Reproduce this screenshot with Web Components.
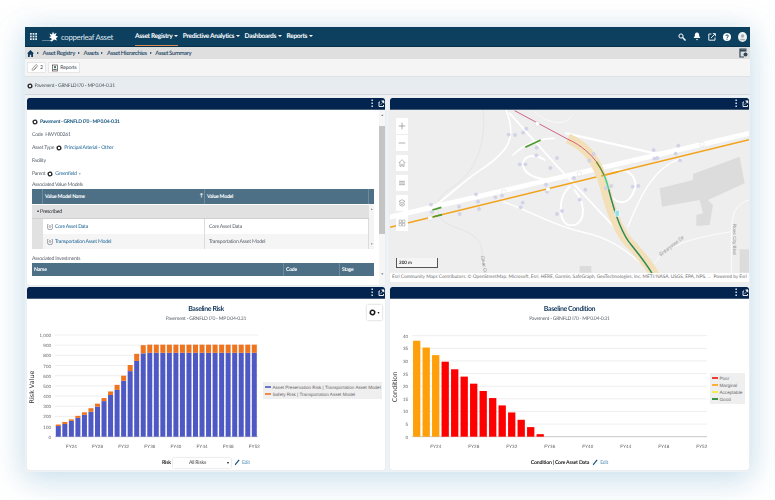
<!DOCTYPE html>
<html lang="en">
<head>
<meta charset="utf-8">
<title>Asset Summary</title>
<style>
html, body { margin: 0; background: #fff; }
body { padding: 27px 25px 0; width: 725px; height: 473px; overflow: hidden; font-family: Lato, "Liberation Sans", sans-serif; text-rendering: geometricPrecision; }
</style>
</head>
<body>
<asset-app></asset-app>

<script>
// Small shared icons.
const gearIcon = (size, color = '#1a1a1a') => `
<svg width="${size}" height="${size}" viewBox="0 0 12 12" style="flex:none">
  <circle cx="6" cy="6" r="3.6" fill="none" stroke="${color}" stroke-width="2.2"/>
  <circle cx="6" cy="6" r="4.9" fill="none" stroke="${color}" stroke-width="1.2" stroke-dasharray="1.4 1.1"/>
</svg>`

const panelIcons = `
<svg width="15" height="9" viewBox="0 0 15 9">
  <g fill="#fff"><rect x="1.5" y="0.5" width="1.3" height="1.5"/><rect x="1.5" y="3.5" width="1.3" height="1.5"/><rect x="1.5" y="6.5" width="1.3" height="1.5"/></g>
  <path d="M10 3H9v4.500h4.500V6" fill="none" stroke="#fff" stroke-width=".9"/>
  <path d="M10.500 6l2.500-3M11.500 1.800h2.500v2.500z" fill="#fff" stroke="#fff" stroke-width=".5"/>
</svg>`

customElements.define('asset-navbar', class extends HTMLElement {
  constructor () {
    super()
    this.attachShadow({ mode: 'open' }).innerHTML = `
<style>
:host { display: flex; align-items: center; height: 19px; background: #0d3f5f; color: #fff; border-bottom: 1px solid #06304b; padding-left: 5px; }
.logo { display: flex; align-items: center; margin-left: 5px; width: 93px; flex: none; }
.name { font-size: 7.8px; font-weight: 400; color: #dfe9ef; letter-spacing: -0.3px; }
nav { display: flex; height: 100%; gap: 4.5px; font-size: 6.6px; font-weight: 700; letter-spacing: -0.33px; }
nav a { display: flex; align-items: center; height: 100%; box-sizing: border-box; border-bottom: 1px solid transparent; }
nav a.active { border-bottom: 1px solid #d98c4e; }
nav a::after { content: ''; border: 2px solid transparent; border-top: 2.6px solid #fff; border-bottom: 0; margin-left: 2px; }
.tools { margin-left: auto; display: flex; align-items: center; gap: 7px; padding-right: 3.5px; }
</style>
<svg width="7" height="7" viewBox="0 0 8 8" fill="#e8eef2" style="flex:none">
  <rect width="2" height="2"/><rect x="3" width="2" height="2"/><rect x="6" width="2" height="2"/>
  <rect y="3" width="2" height="2"/><rect x="3" y="3" width="2" height="2"/><rect x="6" y="3" width="2" height="2"/>
  <rect y="6" width="2" height="2"/><rect x="3" y="6" width="2" height="2"/><rect x="6" y="6" width="2" height="2"/>
</svg>
<div class="logo">
  <svg width="19" height="12" viewBox="0 0 19 12" style="flex:none">
    <path d="M0 9.5h9" stroke="#9fb6c5" stroke-width=".6"/>
    <path d="M8 10l2-2-3-2 2-.5-1.500-3 2.500 1 1-3 1 2.500 2.500-1-1 3 2.500 0-2 2.500 1 2-3-1-2 2z" fill="#fff"/>
  </svg>
  <span class="name">copperleaf Asset</span>
</div>
<nav><a class="active">Asset Registry</a><a>Predictive Analytics</a><a>Dashboards</a><a>Reports</a></nav>
<div class="tools">
  <svg width="8" height="8" viewBox="0 0 8 8"><circle cx="3" cy="3" r="2.1" fill="none" stroke="#fff" stroke-width="1"/><path d="M4.6 4.6L7.5 7.5" stroke="#fff" stroke-width="1.4"/></svg>
  <svg width="8" height="9" viewBox="0 0 8 9"><path d="M4 .5c-1.800 0-2.200 1.500-2.200 3 0 1.300-.8 2-1.200 2.600h6.800c-.4-.6-1.200-1.300-1.200-2.600 0-1.500-.4-3-2.200-3zM3 7h2l-1 1.500z" fill="#fff"/></svg>
  <svg width="8" height="8" viewBox="0 0 8 8"><path d="M3.500 1H.8v6.200H7V4.500" fill="none" stroke="#fff" stroke-width=".9"/><path d="M3 5l4-4M4.800.6h2.600v2.600" fill="none" stroke="#fff" stroke-width=".9"/></svg>
  <svg width="8" height="8" viewBox="0 0 8 8"><circle cx="4" cy="4" r="4" fill="#fff"/><path d="M2.800 3c0-1.500 2.500-1.500 2.500 0 0 1-1.300 1-1.300 2" fill="none" stroke="#0d3f5f" stroke-width=".9"/><rect x="3.500" y="5.700" width="1" height="1" fill="#0d3f5f"/></svg>
  <svg width="9" height="10" viewBox="0 0 9 10"><ellipse cx="4.500" cy="5" rx="4.500" ry="5" fill="#eef1f3"/><circle cx="4.500" cy="4" r="1.700" fill="#a9b0b5"/><path d="M1.500 8.200c.5-2 5.500-2 6 0z" fill="#a9b0b5"/></svg>
</div>`
  }
})

customElements.define('asset-breadcrumb', class extends HTMLElement {
  constructor () {
    super()
    const crumbs = ['Asset Registry', 'Assets', 'Asset Hierarchies', 'Asset Summary']
    this.attachShadow({ mode: 'open' }).innerHTML = `
<style>
:host { display: flex; align-items: center; height: 12px; background: #dfdfdf; padding-left: 2px; font-size: 6px; color: #123a5c; letter-spacing: -0.37px; font-weight: 500; }
i { border: 1.7px solid transparent; border-left: 2.6px solid #123a5c; border-right: 0; margin: 0 3.5px 0 3px; }
svg.gear { margin-left: auto; margin-right: 1px; }
</style>
<svg width="7" height="7" viewBox="0 0 7 7"><path d="M3.500 0L7 3.500H6V7H4.200V4.800H2.800V7H1V3.500H0z" fill="#123a5c"/></svg><i></i>
${crumbs.map((c) => `<span>${c}</span>`).join('<i></i>')}
<svg class="gear" width="10" height="10" viewBox="0 0 10 10"><path d="M7.500 1H1v8h4" fill="none" stroke="#33475a" stroke-width="1.2"/><path d="M1 1.500h6.500v2H1z" fill="#33475a"/><circle cx="6.500" cy="6.500" r="2" fill="#33475a"/></svg>`
  }
})

customElements.define('asset-toolbar', class extends HTMLElement {
  constructor () {
    super()
    this.attachShadow({ mode: 'open' }).innerHTML = `
<style>
:host { display: flex; align-items: center; gap: 2px; height: 18px; background: #f5f5f5; border-bottom: 1px solid #e0e3e5; box-sizing: border-box; padding: 0 2px; font-size: 5.2px; letter-spacing: -0.2px; color: #33414c; }
button { all: unset; display: flex; align-items: center; gap: 2px; height: 11px; padding: 0 2.5px 0 3px; background: #fff; border: 1px solid #e6e6e6; border-radius: 1px; box-sizing: border-box; font: inherit; letter-spacing: inherit; }
</style>
<button><svg width="7" height="8" viewBox="0 0 7 8"><path d="M5.500 2.500L2.700 6c-.9 1-2.200 0-1.400-1.100L4.300 1.200c1.300-1.300 2.700.2 1.700 1.400L3.200 6" fill="none" stroke="#666" stroke-width=".6"/></svg>2</button>
<button><svg width="6" height="8" viewBox="0 0 7 8"><rect x=".5" y=".5" width="6" height="7" fill="#fff" stroke="#444" stroke-width=".8"/><circle cx="3.500" cy="3" r="1.300" fill="#2f6f5a"/><path d="M1.500 5.700h4" stroke="#444"/></svg>Reports</button>`
  }
})

customElements.define('asset-title', class extends HTMLElement {
  constructor () {
    super()
    this.attachShadow({ mode: 'open' }).innerHTML = `
<style>
:host { display: flex; align-items: center; gap: 1.5px; height: 18px; background: #e6ecef; border-bottom: 1px solid #d5d9dc; box-sizing: border-box; padding-left: 2px; font-size: 5px; letter-spacing: -0.25px; color: #4c5660; }
</style>
${gearIcon(6)}<span><slot></slot></span>`
  }
})

customElements.define('asset-panel', class extends HTMLElement {
  constructor () {
    super()
    this.attachShadow({ mode: 'open' }).innerHTML = `
<style>
:host { display: flex; flex-direction: column; min-height: 0; background: #fff; box-shadow: 0 0 1px #c6ccd0; border-radius: 2px; overflow: hidden; }
header { display: flex; justify-content: flex-end; align-items: center; height: 12px; flex: none; background: #02244f; border-bottom: 1px solid #4a6078; box-sizing: border-box; border-radius: 2px 2px 0 0; }
.body { flex: 1; min-height: 0; position: relative; }
</style>
<header>${panelIcons}</header>
<div class="body"><slot></slot></div>`
  }
})

customElements.define('asset-summary', class extends HTMLElement {
  constructor () {
    super()
    this.attachShadow({ mode: 'open' }).innerHTML = `
<style>
:host { display: flex; height: 100%; font-size: 5.2px; color: #59636c; letter-spacing: -0.25px; }
.main { flex: 1; padding: 5px 5px 0 5px; overflow: hidden; min-width: 0; }
.row { display: flex; align-items: center; gap: 2px; height: 13px; }
a { color: #1f6797; }
a.strong { font-size: 5px; color: #12527f; font-weight: 700; letter-spacing: -0.28px; }
.more { color: #aab; font-size: 4px; }
.caption { height: 8px; line-height: 8px; margin-top: 1px; }
.grid { display: grid; grid-template-columns: 11px 162px 164px 1fr; }
.head { background: #4e7087; color: #fff; font-weight: 700; height: 15px; display: flex; align-items: center; padding-left: 2px; border-right: 1px solid #6f8a9c; box-sizing: border-box; position: relative; }
.head b { position: absolute; right: 1px; top: 4px; font-size: 5px; }
.group { grid-column: 1 / 4; background: #e1e1e1; height: 14px; margin-top: 1px; display: flex; align-items: center; color: #2d3236; padding-left: 5px; gap: 2px; font-size: 5.3px; border-bottom: 1px solid #cfcfcf; box-sizing: border-box; }
.side { background: #e1e1e1; height: 15px; }
.cell { height: 15px; display: flex; align-items: center; gap: 2px; padding-left: 4px; background: #fff; box-sizing: border-box; border-right: 1px solid #dcdcdc; }
.alt { background: #f5f5f5; }
.scroll { grid-column: 4; grid-row: 2 / 5; background: #f4f4f4; color: #888; font-size: 3px; text-align: center; display: flex; flex-direction: column; justify-content: space-between; padding: 3px 0; }
.invest { display: grid; grid-template-columns: 252px 56px 1fr; }
.invest div { background: #4e7087; color: #fff; font-weight: 700; height: 13px; display: flex; align-items: center; padding-left: 2px; border-right: 1px solid #6f8a9c; box-sizing: border-box; }
.bar { flex: none; width: 6px; background: #f6f6f6; box-sizing: border-box; display: flex; flex-direction: column; color: #666; font-size: 3px; text-align: center; }
.bar span { height: 17px; line-height: 10px; }
.thumb { height: 118px; background: #c4c4c4; margin-bottom: 35px; }
</style>
<div class="main">
  <div class="row">${gearIcon(6)}<a class="strong">Pavement - GRNFLD I70 - MP 0.04-0.31</a></div>
  <div class="row">Code&nbsp; HWY00261</div>
  <div class="row">Asset Type ${gearIcon(6)}<a>Principal Arterial - Other</a></div>
  <div class="row">Facility</div>
  <div class="row">Parent ${gearIcon(6)}<a>Greenfield</a><span class="more">▾</span></div>
  <div class="caption">Associated Value Models</div>
  <div class="grid">
    <div class="head"></div><div class="head">Value Model Name<b>↑</b></div><div class="head">Value Model</div><div class="head" style="border:0"></div>
    <div class="group">▪ Prescribed</div><div class="scroll"><span>▲</span><span>▼</span></div>
    <div class="side"></div><div class="cell">${this.modelIcon()}<a>Core Asset Data</a></div><div class="cell">Core Asset Data</div>
    <div class="side"></div><div class="cell alt">${this.modelIcon()}<a>Transportation Asset Model</a></div><div class="cell alt">Transportation Asset Model</div>
  </div>
  <div class="caption" style="margin-top:6px">Associated Investments</div>
  <div class="invest"><div>Name</div><div>Code</div><div style="border:0">Stage</div></div>
</div>
<div class="bar"><span>▲</span><div class="thumb"></div><span>▼</span></div>`
  }

  /**
   * The little model glyph in the grid rows.
   *
   * @returns {string} The svg markup.
   */
  modelIcon () {
    return '<svg width="6" height="6" viewBox="0 0 6 6" style="flex:none"><path d="M1.500.5H.5v4h1M4.500.5h1v4h-1" fill="none" stroke="#778" stroke-width=".6"/><circle cx="3" cy="2.500" r="1" fill="none" stroke="#778" stroke-width=".6"/><path d="M1 5.500h4" stroke="#778" stroke-width=".6"/></svg>'
  }
})

customElements.define('asset-map', class extends HTMLElement {
  constructor () {
    super()
    const dots = [[362, 104], [381, 105], [405, 98], [415, 86], [446, 143], [445, 166], [507, 174], [395, 193], [412, 193], [487, 204], [558, 234], [474, 254], [477, 275], [592, 269], [575, 299], [404, 308], [398, 322], [507, 342], [522, 333], [264, 283], [270, 305], [273, 327], [322, 292], [342, 287], [213, 320], [215, 342], [129, 314], [132, 337], [617, 162], [604, 182], [653, 264], [670, 258], [734, 260], [751, 258], [797, 150], [799, 176], [808, 174], [871, 137], [863, 161], [876, 181]]
    const shields = [[448, 72], [347, 275], [480, 268], [574, 222], [942, 133], [126, 354]]
    const buttons = [
      '<path d="M6 2v8M2 6h8" stroke="#777" stroke-width=".7"/>',
      '<path d="M2 6h8" stroke="#777" stroke-width=".7"/>',
      '<path d="M2 6l4-4 4 4M3.500 5v5h1.500V8h2v2h1.500V5" fill="none" stroke="#777" stroke-width=".6"/>',
      '<path d="M2.500 4h7M2.500 6h7M2.500 8h7" stroke="#777" stroke-width=".7"/>',
      '<path d="M6 2l3.500 2L6 6 2.500 4zM2.500 6L6 8l3.500-2M2.500 8L6 10l3.500-2" fill="none" stroke="#777" stroke-width=".6"/>',
      '<path d="M2.500 2.500h3v3h-3zM6.500 2.500h3v3h-3zM2.500 6.500h3v3h-3zM6.500 6.500h3v3h-3z" fill="none" stroke="#777" stroke-width=".5"/>'
    ]
    this.attachShadow({ mode: 'open' }).innerHTML = `
<style>
:host { display: block; position: relative; height: 100%; background: #eeeeee; overflow: hidden; }
svg.map { display: block; width: 100%; height: 100%; }
.controls { position: absolute; left: 6px; top: 8px; display: flex; flex-direction: column; gap: 4px; }
.group { display: flex; flex-direction: column; gap: 1px; }
.group span { display: flex; width: 12px; height: 16px; align-items: center; justify-content: center; background: #fff; }
.scale { position: absolute; left: 6px; bottom: 17px; width: 42px; height: 10px; border: 1px solid #555; border-top: 0; font-size: 4.6px; font-weight: 700; line-height: 9px; color: #333; padding-left: 2px; box-sizing: border-box; background: rgba(255,255,255,.4); }
.credit { position: absolute; left: 0; right: 0; bottom: 3px; display: flex; justify-content: space-between; height: 9px; line-height: 9px; padding: 0 2px; background: #fff; font-size: 4.75px; color: #6e6e6e; white-space: nowrap; overflow: hidden; }
text { font-family: "Liberation Sans", sans-serif; fill: #8b8b8b; }
</style>
<svg class="map" viewBox="6 30 1077 525" preserveAspectRatio="none">
  <g fill="#dcdcdc">
    <path d="M815 265L915 240V222L1055 170L1070 250L960 300L975 315L965 375L925 378V345L945 340L935 300L822 320z"/>
    <rect x="575" y="498" width="35" height="20"/>
    <rect x="1055" y="448" width="28" height="70"/>
  </g>
  <path d="M285 30C295 120 270 220 180 270C150 290 140 320 155 350C175 390 260 380 280 440L290 520" fill="none" stroke="#e0e0e0" stroke-width="2"/>
  <g fill="none" stroke="#fff" stroke-linecap="round">
    <path d="M6 351L1083 100" stroke-width="15"/>
    <path d="M355 32C385 110 370 150 270 215C220 250 180 290 130 325" stroke-width="5"/>
    <path d="M365 40L500 190L640 340L735 440" stroke-width="5"/>
    <path d="M500 115C440 115 400 140 375 165" stroke-width="5"/>
    <path d="M535 100L800 160L880 150" stroke-width="7"/>
    <path d="M530 230C470 250 410 230 405 195C405 165 440 160 470 180" stroke-width="6"/>
    <path d="M545 260C510 290 510 360 540 375C590 385 600 320 560 270" stroke-width="6"/>
    <path d="M680 210C730 205 755 240 735 280C715 320 680 310 665 280" stroke-width="6"/>
    <path d="M345 305C420 330 500 380 600 400C660 415 700 440 760 490" stroke-width="4"/>
    <path d="M880 175C800 200 760 280 720 380" stroke-width="4"/>
    <path d="M800 490C830 440 900 415 1030 395" stroke-width="2.5"/>
    <path d="M1083 300C1040 310 1030 350 1030 400V520" stroke-width="2.5"/>
    <path d="M440 35C470 70 540 80 548 50" stroke-width="2"/>
  </g>
  <path d="M6 382L1083 119" fill="none" stroke="#f2a31b" stroke-width="4.5"/>
  <path d="M540 115C600 140 630 190 650 260C670 340 700 410 735 440C760 470 780 490 800 525" fill="none" stroke="#f3dfb8" stroke-width="30"/>
  <path d="M640 228L690 216" stroke="#f2a31b" stroke-width="4.5"/>
  <path d="M380 32L540 118C580 135 610 165 625 185" fill="none" stroke="#c9476e" stroke-width="2.5"/>
  <path d="M625 185C635 200 642 212 648 225" fill="none" stroke="#6a8a2c" stroke-width="4.5"/>
  <path d="M648 225C654 238 658 252 662 268" fill="none" stroke="#35d0a0" stroke-width="4.5"/>
  <path d="M662 268C680 340 700 400 730 435C750 460 775 490 795 525" fill="none" stroke="#2c8a58" stroke-width="4.5"/>
  <g stroke="#4d9b30" stroke-width="5">
    <path d="M412 142L458 120"/><path d="M133 330L160 322"/><path d="M135 351L162 344"/>
  </g>
  <g fill="#d2d4ea" stroke="#c2c5e0" stroke-width="1">
    ${dots.map(([x, y]) => `<circle cx="${x}" cy="${y}" r="5"/>`).join('')}
  </g>
  <g fill="#fff" stroke="#c9c9c9" stroke-width="1">
    ${shields.map(([x, y]) => `<rect x="${x - 6}" y="${y - 6}" width="12" height="12" rx="2"/>`).join('')}
  </g>
  <rect x="681" y="331" width="13" height="18" rx="2" fill="#8fe0e8" stroke="#fff" stroke-width="2"/>
  <text font-size="15" transform="translate(820 470) rotate(-38)">Enterprise Dr</text>
  <text font-size="14" transform="translate(1034 372) rotate(90)">Rose City Blvd</text>
  <text font-size="14" transform="translate(279 468) rotate(80)">Clear Cr</text>
</svg>
<div class="controls">
  <div class="group"><span>${this.glyph(buttons[0])}</span><span>${this.glyph(buttons[1])}</span></div>
  <div class="group"><span>${this.glyph(buttons[2])}</span></div>
  <div class="group"><span>${this.glyph(buttons[3])}</span></div>
  <div class="group"><span>${this.glyph(buttons[4])}</span></div>
  <div class="group"><span>${this.glyph(buttons[5])}</span></div>
</div>
<div class="scale">200 m</div>
<div class="credit"><span>Esri Community Maps Contributors, © OpenStreetMap, Microsoft, Esri, HERE, Garmin, SafeGraph, GeoTechnologies, Inc, METI/NASA, USGS, EPA, NPS, ...</span><span>Powered by Esri</span></div>`
  }

  /**
   * Wraps the strokes of a map button in an svg.
   *
   * @param {string} body The svg content.
   * @returns {string} The svg markup.
   */
  glyph (body) {
    return `<svg width="10" height="10" viewBox="0 0 12 12">${body}</svg>`
  }
})

/**
 * Draws the bars, axes and legend that both charts have.
 *
 * @param {object} o The chart options.
 * @returns {string} The svg markup.
 */
function chartSvg (o) {
  const toY = (v) => o.y0 - (v / o.max) * (o.y0 - o.y1)
  let grid = ''
  for (let v = 0; v <= o.max; v += o.step) {
    const y = toY(v)
    grid += `<line x1="${o.x0}" x2="${o.x1}" y1="${y}" y2="${y}" stroke="${v === 0 ? '#c8c8c8' : '#eeeeee'}" stroke-width="1"/>`
    grid += `<text x="${o.x0 - 4}" y="${y + 2}" text-anchor="end">${v.toLocaleString('en-US')}</text>`
  }
  let labels = ''
  for (let i = 2; i <= 30; i += 4) {
    labels += `<text x="${o.bx + o.dx * i}" y="${o.y0 + 11}" text-anchor="middle">FY${22 + i}</text>`
  }
  const bars = o.series.map((s) => s.map((seg) => `<rect x="${seg.x - o.bw / 2}" y="${toY(seg.to)}" width="${o.bw}" height="${toY(seg.from) - toY(seg.to)}" fill="${seg.color}"/>`).join('')).join('')
  const legend = o.legend.map((l, i) => `<rect x="${o.lx + 2}" y="${o.ly + 4.2 + i * o.lh}" width="6" height="1.6" fill="${l.color}"/><text x="${o.lx + 9.5}" y="${o.ly + 6.7 + i * o.lh}">${l.name}</text>`).join('')
  return `<svg width="${o.w}" height="135" viewBox="0 0 ${o.w} 135" style="display:block;flex:none;font-family:'Liberation Sans',sans-serif;font-size:4.6px;fill:#666">
    ${grid}${labels}${bars}
    <text transform="translate(${o.ax} ${o.ay}) rotate(-90)" text-anchor="middle" style="font-family:'DejaVu Sans',sans-serif;font-size:6.4px;fill:#333">${o.axis}</text>
    <rect x="${o.lx}" y="${o.ly}" width="${o.lw}" height="${o.legend.length * o.lh + 3}" fill="#efefef"/>${legend}
  </svg>`
}

const chartStyles = `
:host { display: flex; flex-direction: column; height: 100%; position: relative; }
.head { height: 25px; flex: none; text-align: center; box-sizing: border-box; padding-top: 5px; }
h2 { margin: 0; font-size: 7px; line-height: 10px; color: #14385c; font-weight: 700; letter-spacing: -0.4px; }
p { margin: 0; font-size: 5px; line-height: 10px; color: #5a636b; letter-spacing: -0.25px; }
.foot { height: 7px; flex: none; display: flex; align-items: center; justify-content: center; gap: 2px; font-size: 5.2px; letter-spacing: -0.2px; font-weight: 700; color: #222; }
.foot a { color: #5b93b8; font-weight: 400; }
.foot svg { flex: none; }
.pencil { margin-left: 1px; }
`
const pencil = '<svg class="pencil" width="6" height="7" viewBox="0 0 6 7"><path d="M.8 6.500L1 5 4.700.5 5.600 1.300 1.900 5.800z" fill="#12527f"/></svg>'

customElements.define('risk-chart', class extends HTMLElement {
  constructor () {
    super()
    const blue = [105, 125, 155, 185, 215, 245, 295, 350, 410, 460, 550, 645, 745, 820]
    const total = [120, 145, 170, 205, 240, 280, 325, 380, 445, 510, 600, 705, 815, 900]
    const series = []
    for (let i = 0; i <= 30; i++) {
      const x = 31.3 + i * 6.533
      const b = blue[i] ?? 825
      const t = total[i] ?? 905
      series.push([{ x, from: 0, to: b, color: '#4f59c4' }, { x, from: b, to: t, color: '#ee7420' }])
    }
    const svg = chartSvg({
      w: 358, max: 1000, step: 100, x0: 28, x1: 231, y0: 112.7, y1: 11, bx: 31.3, dx: 6.533, bw: 5, series,
      ax: 7, ay: 63, axis: 'Risk Value',
      lx: 236, ly: 58, lw: 119, lh: 7,
      legend: [{ name: 'Asset Preservation Risk | Transportation Asset Model', color: '#4f59c4' }, { name: 'Safety Risk | Transportation Asset Model', color: '#ee7420' }]
    })
    this.attachShadow({ mode: 'open' }).innerHTML = `
<style>${chartStyles}
.menu { position: absolute; right: 3px; top: 6px; width: 15px; height: 15px; display: flex; align-items: center; justify-content: center; gap: 1px; background: #fff; box-shadow: 0 0 2px #bbb; font-size: 4px; color: #222; }
.select { display: flex; align-items: center; justify-content: space-between; width: 58px; height: 10px; flex: none; box-sizing: border-box; padding: 0 2px 0 16px; background: #fff; box-shadow: 0 0 1.5px #bbb; font-weight: 400; color: #444; }
</style>
<div class="head"><h2>Baseline Risk</h2><p>Pavement - GRNFLD I70 - MP 0.04-0.31</p></div>
<div class="menu">${gearIcon(7)}▾</div>
${svg}
<div class="foot"><span>Risk</span><span class="select">All Risks<span style="font-size:4px;color:#111">▾</span></span>${pencil}<a>Edit</a></div>`
  }
})

customElements.define('condition-chart', class extends HTMLElement {
  constructor () {
    super()
    const values = [38, 35.3, 32.3, 29.7, 26.7, 23.8, 21, 18.1, 15.3, 12.4, 9.6, 6.7, 3.8, 1]
    const series = values.map((v, i) => [{ x: 26.7 + i * 9.5, from: 0, to: v, color: i < 3 ? '#ff9f0a' : '#ff0000' }])
    const svg = chartSvg({
      w: 359, max: 40, step: 5, x0: 22, x1: 317, y0: 112.7, y1: 11.7, bx: 26.7, dx: 9.5, bw: 7.3, series,
      ax: 7, ay: 63, axis: 'Condition',
      lx: 320, ly: 49, lw: 35, lh: 7,
      legend: [{ name: 'Poor', color: '#ee1111' }, { name: 'Marginal', color: '#ff9f0a' }, { name: 'Acceptable', color: '#f3ee22' }, { name: 'Good', color: '#0f7a1c' }]
    })
    this.attachShadow({ mode: 'open' }).innerHTML = `
<style>${chartStyles}</style>
<div class="head"><h2>Baseline Condition</h2><p>Pavement - GRNFLD I70 - MP 0.04-0.31</p></div>
${svg}
<div class="foot"><span>Condition | Core Asset Data</span>${pencil}<a>Edit</a></div>`
  }
})

customElements.define('asset-app', class extends HTMLElement {
  constructor () {
    super()
    this.attachShadow({ mode: 'open' }).innerHTML = `
<style>
:host { display: block; width: 725px; height: 445px; background: #eef2f4; box-shadow: 0 14px 30px rgba(170,205,225,.35), 6px 0 24px rgba(170,205,225,.25), -6px 0 24px rgba(170,205,225,.25); filter: blur(.45px); }
.panels { display: grid; grid-template-columns: 358px 359px; grid-template-rows: 187px 183px; gap: 2px 5px; padding: 3px 2px 0; }
</style>
<asset-navbar></asset-navbar>
<asset-breadcrumb></asset-breadcrumb>
<asset-toolbar></asset-toolbar>
<asset-title>Pavement - GRNFLD I70 - MP 0.04-0.31</asset-title>
<div class="panels">
  <asset-panel><asset-summary></asset-summary></asset-panel>
  <asset-panel><asset-map></asset-map></asset-panel>
  <asset-panel><risk-chart></risk-chart></asset-panel>
  <asset-panel><condition-chart></condition-chart></asset-panel>
</div>`
  }
})
</script>
</body>
</html>
